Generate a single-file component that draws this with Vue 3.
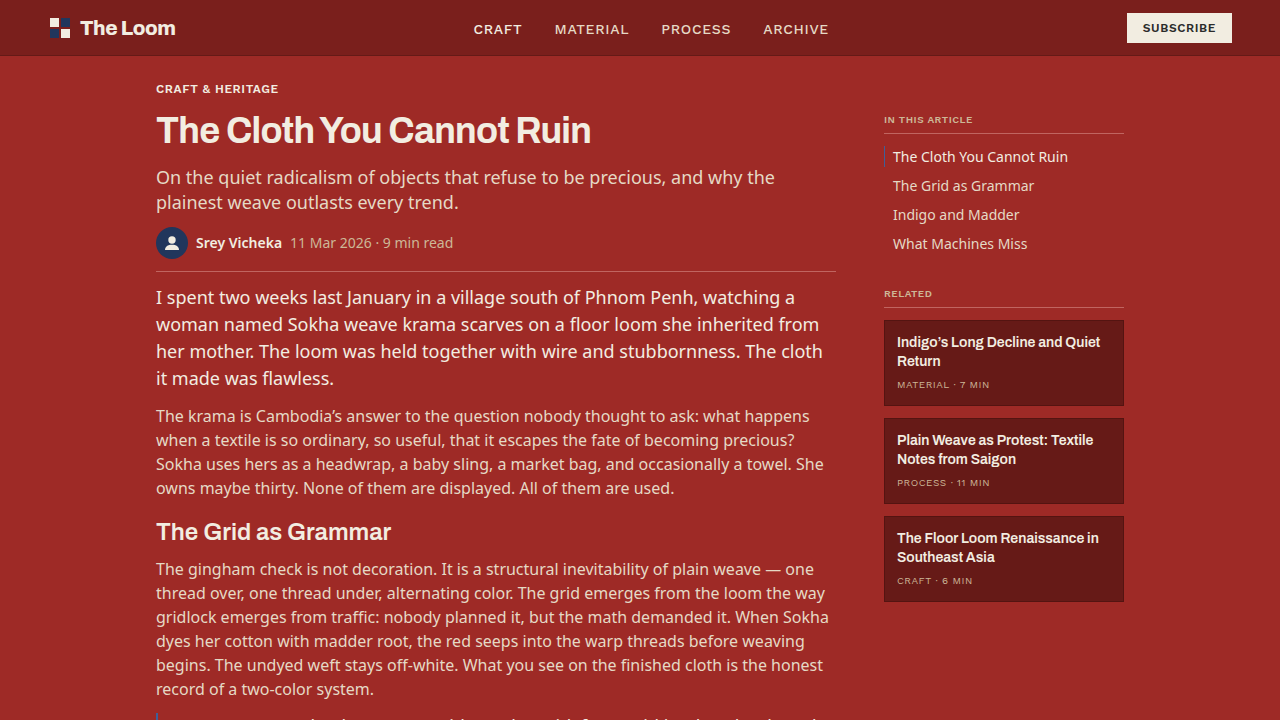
<script setup>
const nav = ['Craft', 'Material', 'Process', 'Archive']
const toc = ['The Cloth You Cannot Ruin', 'The Grid as Grammar', 'Indigo and Madder', 'What Machines Miss']
const related = [
  { title: 'Indigo’s Long Decline and Quiet Return', meta: 'Material · 7 min' },
  { title: 'Plain Weave as Protest: Textile Notes from Saigon', meta: 'Process · 11 min' },
  { title: 'The Floor Loom Renaissance in Southeast Asia', meta: 'Craft · 6 min' },
]
</script>

<template>
  <div class="page">
    <header class="bar">
      <a class="brand" href="#">
        <svg width="20" height="20" viewBox="0 0 20 20" aria-hidden="true">
          <path fill="#f2ede1" d="M0 0h9v9H0zM11 11h9v9h-9z" />
          <path fill="#21365c" d="M11 0h9v9h-9zM0 11h9v9H0z" />
        </svg>
        <span>The Loom</span>
      </a>
      <nav class="nav" aria-label="Sections">
        <a v-for="(n, i) in nav" :key="n" href="#" :class="{ active: i === 0 }">{{ n }}</a>
      </nav>
      <button class="subscribe" type="button">Subscribe</button>
    </header>

    <div class="layout">
      <article class="article">
        <p class="kicker">Craft &amp; Heritage</p>
        <h1>The Cloth You Cannot Ruin</h1>
        <p class="deck">On the quiet radicalism of objects that refuse to be precious, and why the plainest weave outlasts every trend.</p>
        <div class="byline">
          <span class="avatar">
            <svg width="16" height="16" viewBox="0 0 16 16" fill="#f2ede1" aria-hidden="true">
              <circle cx="8" cy="5" r="3.7" />
              <path d="M1 15c0-3.4 2.8-5.300 7-5.300s7 1.900 7 5.300z" />
            </svg>
          </span>
          <strong>Srey Vicheka</strong>
          <span class="date">11 Mar 2026 · 9 min read</span>
        </div>
        <p class="lead">I spent two weeks last January in a village south of Phnom Penh, watching a woman named Sokha weave krama scarves on a floor loom she inherited from her mother. The loom was held together with wire and stubbornness. The cloth it made was flawless.</p>
        <p class="body">The krama is Cambodia’s answer to the question nobody thought to ask: what happens when a textile is so ordinary, so useful, that it escapes the fate of becoming precious? Sokha uses hers as a headwrap, a baby sling, a market bag, and occasionally a towel. She owns maybe thirty. None of them are displayed. All of them are used.</p>
        <h2>The Grid as Grammar</h2>
        <p class="body">The gingham check is not decoration. It is a structural inevitability of plain weave — one thread over, one thread under, alternating color. The grid emerges from the loom the way gridlock emerges from traffic: nobody planned it, but the math demanded it. When Sokha dyes her cotton with madder root, the red seeps into the warp threads before weaving begins. The undyed weft stays off-white. What you see on the finished cloth is the honest record of a two-color system.</p>
        <blockquote>“You cannot make the pattern without the grid, for a grid is what the thread is.</blockquote>
      </article>

      <aside class="side">
        <section class="toc">
          <h3>In this article</h3>
          <ul>
            <li v-for="(t, i) in toc" :key="t"><a href="#" :class="{ active: i === 0 }">{{ t }}</a></li>
          </ul>
        </section>
        <section>
          <h3>Related</h3>
          <div class="cards">
            <a v-for="r in related" :key="r.title" class="card" href="#">
              <span class="card-title">{{ r.title }}</span>
              <span class="card-meta">{{ r.meta }}</span>
            </a>
          </div>
        </section>
      </aside>
    </div>
  </div>
</template>

<style>
html {
  background: #9e2a26;
  scrollbar-width: none;
}
body {
  margin: 0;
}
</style>

<style scoped>
.page {
  min-height: 100vh;
  background: #9e2a26;
  color: #f2ede1;
  font-family: "Noto Sans", sans-serif;
}
.page * {
  box-sizing: border-box;
}
h1, h2, h3, p, ul, blockquote {
  margin: 0;
  padding: 0;
}
a {
  color: inherit;
  text-decoration: none;
}
.bar {
  display: flex;
  justify-content: space-between;
  align-items: center;
  height: 56px;
  padding: 0 48px;
  background: #7a1f1c;
  border-bottom: 1px solid #651a17;
}
.brand {
  display: flex;
  align-items: center;
  gap: 10px;
  padding-left: 2px;
  font: 800 20px/28px Archivo, "Liberation Sans", sans-serif;
  letter-spacing: -0.02em;
}
.nav {
  display: flex;
  gap: 32px;
  padding-top: 2px;
  font: 500 14px/20px "Work Sans", Inter, sans-serif;
  letter-spacing: 0.05em;
  text-transform: uppercase;
  color: #e5d9c5;
}
.nav .active {
  color: #f2ede1;
}
.subscribe {
  height: 30px;
  padding: 0 16px;
  border: 0;
  background: #f2ede1;
  color: #2b2b2b;
  font: 600 12px/14px "Work Sans", Inter, sans-serif;
  letter-spacing: 0.05em;
  text-transform: uppercase;
}
.layout {
  display: grid;
  grid-template-columns: minmax(0, 680px) 240px;
  justify-content: center;
  gap: 48px;
  padding: 24px 48px;
}
.kicker {
  font: 600 12px/18px "Work Sans", Inter, sans-serif;
  letter-spacing: 0.05em;
  text-transform: uppercase;
}
h1 {
  margin-top: 13px;
  font: 700 36px/40px Archivo, "Liberation Sans", sans-serif;
  letter-spacing: -0.02em;
}
.deck {
  margin-top: 14px;
  font-size: 18px;
  line-height: 25px;
  color: #e5d9c5;
}
.byline {
  display: flex;
  align-items: center;
  gap: 8px;
  margin-top: 12px;
  padding-bottom: 12px;
  border-bottom: 1px solid #c06560;
  font-size: 14px;
  line-height: 20px;
}
.byline strong {
  font-weight: 600;
}
.avatar {
  display: flex;
  align-items: center;
  justify-content: center;
  width: 32px;
  height: 32px;
  border-radius: 50%;
  background: #21365c;
}
.date {
  color: #cdb797;
}
.lead {
  margin-top: 12px;
  font-size: 18px;
  line-height: 27px;
}
.body {
  margin-top: 12px;
  font-size: 16px;
  line-height: 24px;
  color: #e5d9c5;
}
h2 {
  margin-top: 16px;
  font: 600 24px/32px Archivo, "Liberation Sans", sans-serif;
}
h2 + .body {
  margin-top: 9px;
}
blockquote {
  margin-top: 12px;
  padding-left: 20px;
  border-left: 2px solid #3f5f98;
  font-size: 18px;
  line-height: 27px;
}
.side {
  padding-top: 31px;
}
h3 {
  padding-bottom: 4px;
  border-bottom: 1px solid #c06560;
  font: 600 10px/18px "Work Sans", Inter, sans-serif;
  letter-spacing: 0.05em;
  text-transform: uppercase;
  color: #cdb797;
}
.toc {
  margin-bottom: 31px;
}
ul {
  display: grid;
  gap: 8px;
  margin-top: 12px;
  list-style: none;
}
li a {
  display: block;
  padding-left: 8px;
  border-left: 1px solid transparent;
  font-size: 14px;
  line-height: 21px;
  color: #e5d9c5;
}
li .active {
  border-left-color: #3f5f98;
  color: #f2ede1;
}
.cards {
  display: grid;
  gap: 12px;
  margin-top: 12px;
}
.card {
  display: block;
  padding: 12px;
  border: 1px solid #541411;
  background: #661a17;
}
.card-title {
  display: block;
  font: 600 14px/19px Archivo, "Liberation Sans", sans-serif;
}
.card-meta {
  display: block;
  margin-top: 6px;
  font: 400 10px/16px "Work Sans", Inter, sans-serif;
  letter-spacing: 0.05em;
  text-transform: uppercase;
  color: #cdb797;
}
</style>
